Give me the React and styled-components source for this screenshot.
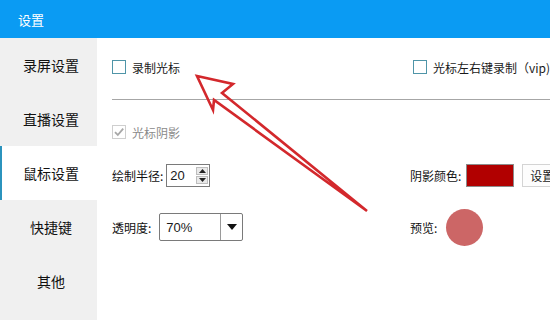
import React from 'react';
import styled, { createGlobalStyle } from 'styled-components';

const FONT = '"Microsoft YaHei", "Noto Sans CJK SC", "Noto Sans", sans-serif';

const GlobalStyle = createGlobalStyle`
  html, body {
    margin: 0;
    padding: 0;
    background: #ffffff;
  }
  body {
    font-family: ${FONT};
    color: #1a1a1a;
  }
`;

const navItems = ['录屏设置', '直播设置', '鼠标设置', '快捷键', '其他'];

const App = () => {
  return (
    <Window>
      <GlobalStyle />
      <TitleBar>设置</TitleBar>
      <Body>
        <Sidebar>
          {navItems.map((item) => (
            <NavItem key={item} $active={item === '鼠标设置'}>
              {item}
            </NavItem>
          ))}
        </Sidebar>

        <Content>
          <Row $top={17} $height={24}>
            <Cell>
              <CheckBox />
              <CheckLabel>录制光标</CheckLabel>
            </Cell>
            <Cell $indent={3}>
              <CheckBox />
              <CheckLabel>光标左右键录制（vip)</CheckLabel>
            </Cell>
          </Row>

          <Divider />

          <Row $top={20} $height={24}>
            <Cell>
              <CheckBox $disabled>
                <svg width="12" height="12" viewBox="0 0 12 12">
                  <path
                    d="M2 6.2 L4.8 9 L10.2 2.6"
                    fill="none"
                    stroke="#a8a8a8"
                    strokeWidth="1.8"
                  />
                </svg>
              </CheckBox>
              <CheckLabel $disabled>光标阴影</CheckLabel>
            </Cell>
          </Row>

          <Row $top={19} $height={24}>
            <Cell>
              <FieldLabel>绘制半径:</FieldLabel>
              <SpinBox>
                <SpinValue>20</SpinValue>
                <SpinButtons>
                  <SpinButton>
                    <svg width="7" height="4" viewBox="0 0 7 4">
                      <path d="M0 4 L3.5 0 L7 4 Z" fill="#222" />
                    </svg>
                  </SpinButton>
                  <SpinButton>
                    <svg width="7" height="4" viewBox="0 0 7 4">
                      <path d="M0 0 L7 0 L3.5 4 Z" fill="#222" />
                    </svg>
                  </SpinButton>
                </SpinButtons>
              </SpinBox>
            </Cell>
            <Cell>
              <FieldLabel>阴影颜色:</FieldLabel>
              <Swatch />
              <SetButton>设置</SetButton>
            </Cell>
          </Row>

          <Row $top={21} $height={38}>
            <Cell>
              <FieldLabel $gap={8}>透明度:</FieldLabel>
              <Combo>
                <ComboValue>70%</ComboValue>
                <ComboArrow>
                  <svg width="10" height="6" viewBox="0 0 10 6">
                    <path d="M0 0 L10 0 L5 6 Z" fill="#111" />
                  </svg>
                </ComboArrow>
              </Combo>
            </Cell>
            <Cell>
              <FieldLabel $gap={9}>预览:</FieldLabel>
              <Preview />
            </Cell>
          </Row>
        </Content>
      </Body>

      <ArrowLayer width="550" height="320" viewBox="0 0 550 320">
        <polygon
          points="197,76 233,84 222,93 367,211 214,100 213,110"
          fill="none"
          stroke="#d3282c"
          strokeWidth="2.6"
          strokeLinejoin="miter"
        />
      </ArrowLayer>
    </Window>
  );
};

const Window = styled.div`
  position: relative;
  width: 550px;
  height: 320px;
  overflow: hidden;
  display: flex;
  flex-direction: column;
  background: #ffffff;
`;

const TitleBar = styled.div`
  height: 38px;
  flex: none;
  display: flex;
  align-items: center;
  padding-left: 18px;
  background: #0a9bf3;
  color: #ffffff;
  font-size: 13px;
`;

const Body = styled.div`
  flex: 1;
  display: flex;
`;

const Sidebar = styled.div`
  width: 97px;
  flex: none;
  background: #f0f0f0;
  display: flex;
  flex-direction: column;
`;

const NavItem = styled.div`
  height: 54px;
  display: flex;
  align-items: center;
  justify-content: center;
  padding-left: 5px;
  font-size: 14px;
  color: #111;
  background: ${(p) => (p.$active ? '#ffffff' : 'transparent')};
  box-shadow: ${(p) => (p.$active ? 'inset 2px 0 0 #2b93bd' : 'none')};
`;

const Content = styled.div`
  flex: 1;
  display: flex;
  flex-direction: column;
  padding-left: 15px;
`;

const Row = styled.div`
  margin-top: ${(p) => p.$top}px;
  height: ${(p) => p.$height}px;
  display: grid;
  grid-template-columns: 298px 1fr;
  align-items: center;
`;

const Cell = styled.div`
  display: flex;
  align-items: center;
  padding-left: ${(p) => p.$indent || 0}px;
  white-space: nowrap;
`;

const CheckBox = styled.span`
  width: 14px;
  height: 14px;
  box-sizing: border-box;
  flex: none;
  display: flex;
  align-items: center;
  justify-content: center;
  border: 1px solid ${(p) => (p.$disabled ? '#cfcfcf' : '#4f95a8')};
  background: #ffffff;
`;

const CheckLabel = styled.span`
  margin-left: 6px;
  font-size: 12px;
  color: ${(p) => (p.$disabled ? '#8a8a8a' : '#1a1a1a')};
`;

const Divider = styled.div`
  margin-top: 20px;
  height: 1px;
  background: #a6a6a6;
`;

const FieldLabel = styled.span`
  font-size: 12px;
  color: #111;
  margin-right: ${(p) => p.$gap || 3}px;
`;

const SpinBox = styled.div`
  width: 44px;
  height: 23px;
  box-sizing: border-box;
  border: 1px solid #7a7a7a;
  display: flex;
  align-items: center;
  justify-content: space-between;
  padding: 0 1px 0 3px;
  background: #fff;
`;

const SpinValue = styled.span`
  font-family: "Liberation Sans", Arial, sans-serif;
  font-size: 13px;
`;

const SpinButtons = styled.div`
  display: flex;
  flex-direction: column;
  gap: 1px;
`;

const SpinButton = styled.div`
  width: 12px;
  height: 8px;
  box-sizing: border-box;
  border: 1px solid #bdbdbd;
  background: #e9e9e9;
  display: flex;
  align-items: center;
  justify-content: center;
`;

const Swatch = styled.div`
  width: 48px;
  height: 23px;
  box-sizing: border-box;
  margin-left: 2px;
  border: 1px solid #8c8c8c;
  background: #b10000;
`;

const SetButton = styled.div`
  margin-left: 8px;
  height: 23px;
  box-sizing: border-box;
  padding: 0 10px 0 7px;
  border: 1px solid #d4d4d4;
  background: #fdfdfd;
  display: flex;
  align-items: center;
  font-size: 12px;
`;

const Combo = styled.div`
  width: 84px;
  height: 28px;
  box-sizing: border-box;
  border: 1px solid #7a7a7a;
  border-radius: 2px;
  display: flex;
  align-items: stretch;
  background: #fff;
`;

const ComboValue = styled.div`
  flex: 1;
  display: flex;
  align-items: center;
  padding-left: 6px;
  font-family: "Liberation Sans", Arial, sans-serif;
  font-size: 13px;
  border-right: 1px solid #9a9a9a;
`;

const ComboArrow = styled.div`
  width: 21px;
  display: flex;
  align-items: center;
  justify-content: center;
`;

const Preview = styled.div`
  width: 37px;
  height: 37px;
  border-radius: 50%;
  background: #cc6666;
`;

const ArrowLayer = styled.svg`
  position: absolute;
  top: 0;
  left: 0;
  pointer-events: none;
`;

export default App;
